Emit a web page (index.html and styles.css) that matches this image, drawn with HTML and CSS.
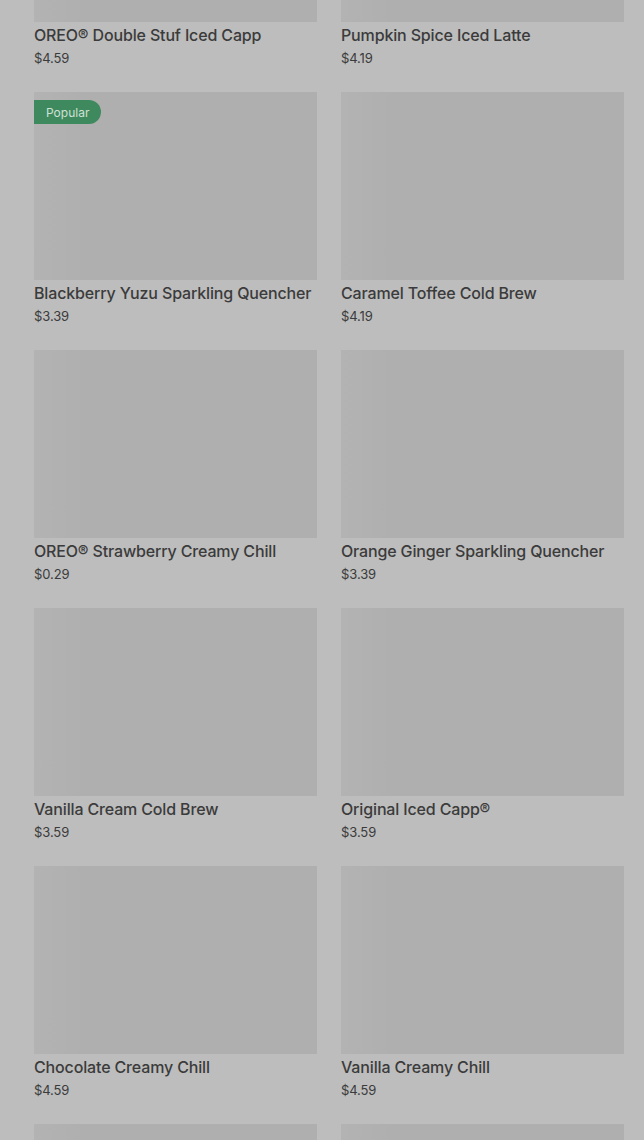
FILE: index.html
```html
<!DOCTYPE html>
<html>
<head>
<meta charset="utf-8">
<link rel="stylesheet" href="styles.css">
</head>
<body>
<div class="grid">
  <div class="card"><div class="thumb"></div><div class="name">OREO® Double Stuf Iced Capp</div><div class="price">$4.59</div></div>
  <div class="card"><div class="thumb"></div><div class="name">Pumpkin Spice Iced Latte</div><div class="price">$4.19</div></div>
  <div class="card"><div class="thumb"><span class="badge">Popular</span></div><div class="name">Blackberry Yuzu Sparkling Quencher</div><div class="price">$3.39</div></div>
  <div class="card"><div class="thumb"></div><div class="name">Caramel Toffee Cold Brew</div><div class="price">$4.19</div></div>
  <div class="card"><div class="thumb"></div><div class="name">OREO® Strawberry Creamy Chill</div><div class="price">$0.29</div></div>
  <div class="card"><div class="thumb"></div><div class="name">Orange Ginger Sparkling Quencher</div><div class="price">$3.39</div></div>
  <div class="card"><div class="thumb"></div><div class="name">Vanilla Cream Cold Brew</div><div class="price">$3.59</div></div>
  <div class="card"><div class="thumb"></div><div class="name">Original Iced Capp®</div><div class="price">$3.59</div></div>
  <div class="card"><div class="thumb"></div><div class="name">Chocolate Creamy Chill</div><div class="price">$4.59</div></div>
  <div class="card"><div class="thumb"></div><div class="name">Vanilla Creamy Chill</div><div class="price">$4.59</div></div>
  <div class="card"><div class="thumb"></div></div>
  <div class="card"><div class="thumb"></div></div>
</div>
</body>
</html>
```

FILE: styles.css
```css
html, body {
  margin: 0;
  padding: 0;
  background: #bdbdbd;
  height: 1140px;
  overflow: hidden;
}
body {
  font-family: Inter, "Noto Sans", sans-serif;
  color: #3b3b3b;
}
.grid {
  display: grid;
  grid-template-columns: 283px 283px;
  column-gap: 24px;
  row-gap: 24px;
  padding-left: 34px;
  margin-top: -166px;
}
.card {
  display: flex;
  flex-direction: column;
}
.thumb {
  position: relative;
  height: 188px;
  background: linear-gradient(90deg, #b3b3b3 0px, #afafaf 50px, #afafaf 100%);
}
.badge {
  position: absolute;
  left: 0;
  top: 8px;
  height: 24px;
  padding: 0 12px;
  display: flex;
  align-items: center;
  background: #3e8a5e;
  color: #cfe0d5;
  font-size: 12px;
  border-radius: 0 12px 12px 0;
}
.name {
  margin-top: 2px;
  font-size: 16px;
  font-weight: 500;
  line-height: 22px;
  letter-spacing: -0.15px;
  white-space: nowrap;
}
.price {
  margin-top: 2px;
  font-size: 13px;
  line-height: 20px;
  letter-spacing: -0.1px;
}
```
